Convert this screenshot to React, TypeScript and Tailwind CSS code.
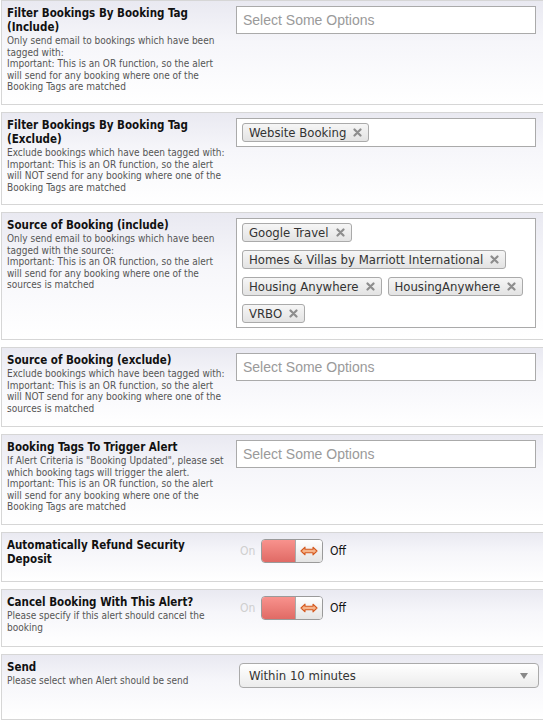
import React from "react";

const font = "font-['DejaVu_Sans_Condensed','DejaVu_Sans',sans-serif]";

function Chip({ label }: { label: string }) {
  return (
    <span className="inline-flex items-center h-[19px] pl-[6px] pr-[6px] border border-[#aaa] rounded-[3px] bg-gradient-to-b from-[#f6f6f6] to-[#e3e3e3] text-[13px] leading-none text-[#333] whitespace-nowrap">
      {label}
      <svg className="ml-[7px]" width="9" height="9" viewBox="0 0 9 9">
        <path d="M1.5 1.5 L7.5 7.5 M7.5 1.5 L1.5 7.5" stroke="#8d8d8d" strokeWidth="2.2" strokeLinecap="round" />
      </svg>
    </span>
  );
}

function TagBox({ tags }: { tags: string[] }) {
  return (
    <div className="w-[300px] border border-[#aaa] bg-white px-[5px] py-[4px] flex flex-wrap gap-x-[6px] gap-y-[8px]">
      {tags.map((t) => (
        <Chip key={t} label={t} />
      ))}
    </div>
  );
}

function EmptySelect() {
  return (
    <div className="w-[300px] h-[28px] border border-[#aaa] bg-white flex items-center pl-[6px] font-['Liberation_Sans',Arial,sans-serif] text-[14px] text-[#9a9a9a]">
      Select Some Options
    </div>
  );
}

function Toggle() {
  return (
    <div className="flex items-center pt-[1px] pl-[4px]">
      <span className="text-[12px] text-[#cfcfcf] w-[21px]">On</span>
      <div className="flex h-[24px] w-[62px] rounded-[4px] border border-[#9a9a9a] overflow-hidden">
        <div className="w-[33px] bg-gradient-to-b from-[#f8928d] to-[#e06a65]" />
        <div className="flex-1 border-l border-[#aaa] bg-gradient-to-b from-white to-[#e4e4e4] flex items-center justify-center">
          <svg width="18" height="10" viewBox="0 0 18 10">
            <path
              d="M1 5 L5 1.2 L5 3.3 L13 3.3 L13 1.2 L17 5 L13 8.8 L13 6.7 L5 6.7 L5 8.8 Z"
              fill="#f6b48a"
              stroke="#d4581e"
              strokeWidth="1.1"
              strokeLinejoin="round"
            />
          </svg>
        </div>
      </div>
      <span className="ml-[7px] text-[12px] text-[#111]">Off</span>
    </div>
  );
}

function SendSelect() {
  return (
    <div className="ml-[3px] mt-[3px] w-[300px] h-[25px] rounded-[4px] border border-[#aaa] bg-gradient-to-b from-white to-[#ececec] flex items-center pl-[9px] pr-[10px] text-[13px] text-[#333]">
      Within 10 minutes
      <svg className="ml-auto" width="8" height="6" viewBox="0 0 8 6">
        <path d="M0 0 L8 0 L4 6 Z" fill="#888" />
      </svg>
    </div>
  );
}

interface Row {
  title: React.ReactNode;
  desc?: React.ReactNode;
  control: React.ReactNode;
  h: string;
}

const rows: Row[] = [
  {
    title: "Filter Bookings By Booking Tag (Include)",
    desc: (
      <>
        Only send email to bookings which have been tagged with:
        <br />
        Important: This is an OR function, so the alert will send for any booking where one of the Booking Tags are matched
      </>
    ),
    control: <EmptySelect />,
    h: "h-[105px]",
  },
  {
    title: "Filter Bookings By Booking Tag (Exclude)",
    desc: (
      <>
        Exclude bookings which have been tagged with:
        <br />
        Important: This is an OR function, so the alert will NOT send for any booking where one of the Booking Tags are matched
      </>
    ),
    control: <TagBox tags={["Website Booking"]} />,
    h: "h-[93px]",
  },
  {
    title: "Source of Booking (include)",
    desc: (
      <>
        Only send email to bookings which have been tagged with the source:
        <br />
        Important: This is an OR function, so the alert will send for any booking where one of the sources is matched
      </>
    ),
    control: (
      <TagBox
        tags={["Google Travel", "Homes & Villas by Marriott International", "Housing Anywhere", "HousingAnywhere", "VRBO"]}
      />
    ),
    h: "h-[128px]",
  },
  {
    title: "Source of Booking (exclude)",
    desc: (
      <>
        Exclude bookings which have been tagged with:
        <br />
        Important: This is an OR function, so the alert will NOT send for any booking where one of the sources is matched
      </>
    ),
    control: <EmptySelect />,
    h: "h-[80px]",
  },
  {
    title: "Booking Tags To Trigger Alert",
    desc: (
      <>
        If Alert Criteria is "Booking Updated", please set which booking tags will trigger the alert.
        <br />
        Important: This is an OR function, so the alert will send for any booking where one of the Booking Tags are matched
      </>
    ),
    control: <EmptySelect />,
    h: "h-[91px]",
  },
  {
    title: "Automatically Refund Security Deposit",
    control: <Toggle />,
    h: "h-[50px]",
  },
  {
    title: "Cancel Booking With This Alert?",
    desc: "Please specify if this alert should cancel the booking",
    control: <Toggle />,
    h: "h-[58px]",
  },
  {
    title: "Send",
    desc: "Please select when Alert should be send",
    control: <SendSelect />,
    h: "h-[66px]",
  },
];

export default function App() {
  return (
    <div className={`w-[543px] h-[723px] overflow-hidden bg-white ${font}`}>
      <div className="w-[570px] pl-[1px] flex flex-col gap-[7px]">
        {rows.map((r, i) => (
          <div
            key={i}
            className={`${r.h} flex border border-[#d6d6d6] bg-gradient-to-b from-[#e9e9f1] via-[#f6f6fa] via-40% to-white`}
          >
            <div className="w-[234px] shrink-0 pl-[5px] pr-[9px] pt-[5px]">
              <div className="max-w-[215px] text-[11.5px] leading-[14px] font-bold text-[#111]">{r.title}</div>
              {r.desc && (
                <div className="mt-[1px] text-[10px] leading-[11.5px] text-[#555]">{r.desc}</div>
              )}
            </div>
            <div className="pt-[5px]">{r.control}</div>
          </div>
        ))}
      </div>
    </div>
  );
}
